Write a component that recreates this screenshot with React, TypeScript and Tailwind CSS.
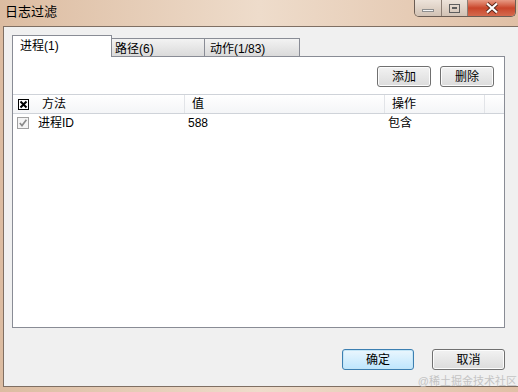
import React from "react";

const font = { fontFamily: '"Liberation Sans", "Noto Sans CJK SC", sans-serif' };

function HeaderCheck() {
  return (
    <svg width="11" height="11" viewBox="0 0 11 11" className="block">
      <rect x="0.5" y="0.5" width="10" height="10" fill="#fff" stroke="#000" />
      <path d="M2.5 2.5 L8.5 8.5 M8.5 2.5 L2.5 8.5" stroke="#000" strokeWidth="2" />
    </svg>
  );
}

function RowCheck() {
  return (
    <svg width="12" height="12" viewBox="0 0 12 12" className="block">
      <rect x="0.5" y="0.5" width="11" height="11" fill="#f4f4f4" stroke="#a0a0a0" />
      <path d="M2.8 6 L5 8.6 L9.4 2.8" stroke="#8a8a8a" strokeWidth="1.6" fill="none" />
    </svg>
  );
}

function WinButton({ children, primary }: { children: React.ReactNode; primary?: boolean }) {
  return (
    <button
      className={
        primary
          ? "w-[72px] h-[21px] rounded-[3px] border border-[#3c7fb1] bg-gradient-to-b from-[#eaf6fd] to-[#bee6fd] text-[12px] text-black shadow-[inset_0_0_0_1px_#c4e5f6]"
          : "w-[73px] h-[21px] rounded-[3px] border border-[#707070] bg-gradient-to-b from-[#f2f2f2] to-[#dcdcdc] text-[12px] text-black shadow-[inset_0_0_0_1px_#fcfcfc]"
      }
    >
      {children}
    </button>
  );
}

export default function App() {
  return (
    <div
      className="relative w-[518px] h-[392px] overflow-hidden bg-gradient-to-r from-[#dcbca1] via-[#eedccb] to-[#e0c0a6] text-black"
      style={font}
    >
      {/* title bar */}
      <div className="flex h-[26px] items-start justify-between">
        <span className="pl-[5px] pt-[4px] text-[13px] leading-[16px]">日志过滤</span>
        <div className="mr-[2px] flex h-[17px] overflow-hidden rounded-b-[5px] border border-t-0 border-[#6b5d54]">
          <div className="flex w-[27px] items-center justify-center border-r border-[#8c7e74] bg-gradient-to-b from-[#ede3da] to-[#d2c2b4]">
            <div className="mt-[5px] h-[3px] w-[12px] border border-[#8f8f8f] bg-[#f4f4f4]" />
          </div>
          <div className="flex w-[26px] items-center justify-center border-r border-[#8c7e74] bg-gradient-to-b from-[#ede3da] to-[#d2c2b4]">
            <div className="h-[9px] w-[11px] border border-[#5e5e5e] p-[2px]">
              <div className="h-[2px] w-full border border-[#5e5e5e]" />
            </div>
          </div>
          <div className="flex w-[47px] items-center justify-center bg-gradient-to-b from-[#e79a84] via-[#c9452a] to-[#d46a4e]">
            <svg width="16" height="12" viewBox="0 0 16 12">
              <path d="M3 1.5 L13 10.5 M13 1.5 L3 10.5" stroke="#5a2a1e" strokeWidth="4" />
              <path d="M3 1.5 L13 10.5 M13 1.5 L3 10.5" stroke="#fff" strokeWidth="2.2" />
            </svg>
          </div>
        </div>
      </div>

      {/* client area */}
      <div className="ml-[3px] h-[361px] border-l border-b border-t border-[#7f6f63] bg-[#f0f0f0] pl-[8px] pt-[8px]">
        {/* tabs */}
        <div className="-mb-px flex h-[22px] items-end text-[12px]">
          <div className="h-[22px] w-[100px] border border-b-0 border-[#898c95] bg-white pl-[7px] pt-[3px] leading-[14px]">
            进程(1)
          </div>
          <div className="h-[19px] w-[93px] border border-l-0 border-[#898c95] bg-gradient-to-b from-[#f3f3f3] to-[#dadada] pl-[3px] pt-[3px] leading-[14px]">
            路径(6)
          </div>
          <div className="h-[19px] w-[95px] border border-l-0 border-[#898c95] bg-gradient-to-b from-[#f3f3f3] to-[#dadada] pl-[5px] pt-[3px] leading-[14px]">
            动作(1/83)
          </div>
        </div>

        {/* tab panel */}
        <div className="h-[272px] w-[493px] border border-[#898c95] bg-white">
          <div className="flex justify-end gap-[9px] pr-[10px] pt-[9px]">
            <button className="h-[21px] w-[54px] rounded-[3px] border border-[#707070] bg-gradient-to-b from-[#f2f2f2] to-[#dcdcdc] text-[12px] shadow-[inset_0_0_0_1px_#fcfcfc]">
              添加
            </button>
            <button className="h-[21px] w-[54px] rounded-[3px] border border-[#707070] bg-gradient-to-b from-[#f2f2f2] to-[#dcdcdc] text-[12px] shadow-[inset_0_0_0_1px_#fcfcfc]">
              删除
            </button>
          </div>

          {/* list header */}
          <div className="mt-[7px] flex h-[20px] items-center border-t border-b border-[#cfd3d9] bg-gradient-to-b from-white to-[#f4f5f7] text-[12px]">
            <div className="flex h-full w-[172px] items-center border-r border-[#e2e4e8]">
              <div className="ml-[5px]">
                <HeaderCheck />
              </div>
              <span className="ml-[13px]">方法</span>
            </div>
            <div className="flex h-full w-[200px] items-center border-r border-[#e2e4e8] pl-[7px]">值</div>
            <div className="flex h-full w-[100px] items-center border-r border-[#e2e4e8] pl-[7px]">操作</div>
          </div>

          {/* row */}
          <div className="flex h-[18px] items-center text-[12px]">
            <div className="flex w-[172px] items-center">
              <div className="ml-[4px]">
                <RowCheck />
              </div>
              <span className="ml-[9px]">进程ID</span>
            </div>
            <div className="w-[200px] pl-[3px]">588</div>
            <div className="pl-[3px]">包含</div>
          </div>
        </div>

        {/* bottom buttons */}
        <div className="mt-[21px] flex justify-end gap-[18px] pr-[13px]">
          <WinButton primary>确定</WinButton>
          <WinButton>取消</WinButton>
        </div>
      </div>

      <span className="absolute right-[1px] bottom-[4px] text-[11px] leading-[13px] text-[#c4c4c4]">
        @稀土掘金技术社区
      </span>
    </div>
  );
}
